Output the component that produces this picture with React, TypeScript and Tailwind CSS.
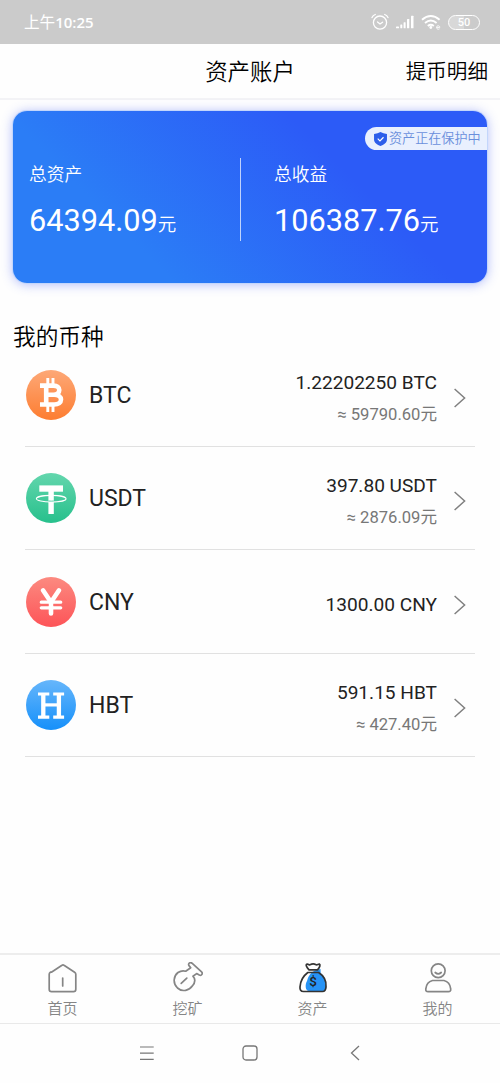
import React from 'react';

type Coin = {
  symbol: string;
  amount: string;
  fiat?: string;
  icon: React.ReactNode;
};

const CoinBadge: React.FC<{ id: string; from: string; to: string; children: React.ReactNode }> = ({ id, from, to, children }) => (
  <svg viewBox="0 0 50 50" className="w-[50px] h-[50px] shrink-0" fill="none">
    <defs>
      <linearGradient id={id} x1="0" y1="0" x2="0" y2="1">
        <stop offset="0" stopColor={from} />
        <stop offset="1" stopColor={to} />
      </linearGradient>
    </defs>
    <circle cx="25" cy="25" r="25" fill={`url(#${id})`} />
    {children}
  </svg>
);

const BtcIcon = () => (
  <CoinBadge id="btc" from="#fda877" to="#fd7d31">
    <g stroke="#fff" strokeWidth="4.6" strokeLinejoin="round">
      <path d="M14 15.6h13.5c3.6 0 5.8 1.7 5.8 4.5s-2.2 4.6-5.8 4.6h-7.3M20.2 24.7h8c4.2 0 6.8 1.9 6.8 4.9s-2.6 4.9-6.8 4.9H14M20.2 15.6v18.9" />
      <path d="M21.8 8v7M27 8v7M21.8 35v7M27 35v7" strokeWidth="2.9" />
    </g>
  </CoinBadge>
);

const UsdtIcon = () => (
  <CoinBadge id="usdt" from="#63d6ad" to="#27c08c">
    <rect x="13.3" y="12.4" width="23.7" height="6.3" fill="#fff" />
    <rect x="22.4" y="17" width="5.4" height="24" fill="#fff" />
    <ellipse cx="25.2" cy="25.7" rx="14.8" ry="3.3" stroke="#fff" strokeWidth="1.1" />
    <path d="M22.4 28c2 .2 4 .2 5.4 0" stroke="#35c493" strokeWidth=".8" />
  </CoinBadge>
);

const CnyIcon = () => (
  <CoinBadge id="cny" from="#fc8a80" to="#fd5458">
    <g stroke="#fff" strokeLinecap="round">
      <path d="m17 13.3 8 12 8-12M25 25v11.5" strokeWidth="4.6" strokeLinejoin="round" />
      <path d="M15.3 25.2h19.4M15.3 30.8h19.4" strokeWidth="3.3" />
      <path d="M15 28h20" stroke="#fd6c6b" strokeWidth="1.6" strokeLinecap="butt" />
      <path d="M25 27v3" strokeWidth="4.4" strokeLinecap="butt" />
    </g>
  </CoinBadge>
);

const HbtIcon = () => (
  <CoinBadge id="hbt" from="#66b6fb" to="#1690fa">
    <g stroke="#fff">
      <path d="M17.3 14v23M32.9 14v23" strokeWidth="4.3" />
      <path d="M12 14h11.3M27.2 14h10.9M12 37.2h11.3M27.2 37.2h10.9" strokeWidth="3.2" />
      <path d="M17 24.9h16" strokeWidth="3.2" />
    </g>
  </CoinBadge>
);

const coins: Coin[] = [
  { symbol: 'BTC', amount: '1.22202250 BTC', fiat: '≈ 59790.60元', icon: <BtcIcon /> },
  { symbol: 'USDT', amount: '397.80 USDT', fiat: '≈ 2876.09元', icon: <UsdtIcon /> },
  { symbol: 'CNY', amount: '1300.00 CNY', icon: <CnyIcon /> },
  { symbol: 'HBT', amount: '591.15 HBT', fiat: '≈ 427.40元', icon: <HbtIcon /> },
];

const StatusBar = () => (
  <div className="h-11 bg-[#cbcbcb] text-white flex items-center justify-between pl-6 pr-[20px]">
    <span className="font-['Open_Sans','Noto_Sans_CJK_SC',sans-serif] text-[15.6px] leading-none pt-[2px]">
      上午<span className="font-semibold text-[15px]">10:25</span>
    </span>
    <div className="flex items-center">
      <svg viewBox="0 0 18 18" className="w-[18px] h-[18px] mr-[6px]" fill="none" stroke="currentColor" strokeWidth="1.3" strokeLinecap="round">
        <circle cx="9" cy="9.6" r="6.6" />
        <path d="M6.5 9 9 11l2.6-1.8M1 4.6Q2 2.4 4.3 1.5M13.7 1.5Q16 2.4 17 4.6" />
      </svg>
      <svg viewBox="0 0 20 14" className="w-[20px] h-[14px] mr-[6px]" fill="currentColor">
        <rect x="1" y="11.5" width="3" height="1.8" rx=".6" />
        <rect x="5.3" y="9.6" width="2" height="3.7" rx=".5" />
        <rect x="8.6" y="7.2" width="2" height="6.1" rx=".5" />
        <rect x="12" y="4" width="2.3" height="9.3" rx=".5" />
        <rect x="16" y=".8" width="2.5" height="12.5" rx=".5" />
      </svg>
      <svg viewBox="0 0 20 16" className="w-[20px] h-[16px] mr-[7px]" fill="none" stroke="currentColor" strokeWidth="1.9">
        <path d="M1 5.7Q9.8-1.8 18.6 5.7M4 9Q9.8 4 15.6 9M6.8 12Q9.8 9.6 12.8 12" />
        <circle cx="9.8" cy="13.5" r="1.4" fill="currentColor" stroke="none" />
        <path d="M15.6 13.4h3.2c0-2.2-3.2-2.2-3.2 0 0 2 2 2.2 3 1.4" strokeWidth=".9" />
      </svg>
      <div className="w-[32px] h-[15px] rounded-full border-[1.5px] border-white flex items-center justify-center bg-[linear-gradient(90deg,#d8d8d8_50%,#cbcbcb_50%)]">
        <span className="font-['Roboto',sans-serif] font-medium text-[11px] leading-none">50</span>
      </div>
    </div>
  </div>
);

const Header = () => (
  <header className="h-14 border-b-2 border-[#f3f3f6] grid grid-cols-[1fr_auto_1fr] items-center px-3 pt-[3px] text-black font-[350]">
    <span />
    <h1 className="text-[22.4px] leading-none">资产账户</h1>
    <button className="justify-self-end text-[20.6px] leading-none">提币明细</button>
  </header>
);

const Total: React.FC<{ label: string; value: string }> = ({ label, value }) => (
  <div>
    <div className="text-[17.7px] leading-[26px] font-[350]">{label}</div>
    <div className="mt-[14px] text-[30.7px] leading-[38px] whitespace-nowrap">
      {value}
      <span className="text-[18.5px] font-[350]">元</span>
    </div>
  </div>
);

const BalanceCard = () => (
  <section className="relative mx-[13px] mt-[11px] h-[172px] rounded-[14px] text-white bg-[linear-gradient(45deg,#2b7df6_25%,#2c5bf7_69%)] shadow-[0_0_0_1px_#c3d6fb,0_1px_12px_rgba(70,95,245,0.45)] flex pt-[47px]">
    <div className="w-[228px] h-[83px] border-r border-white/70 pl-4 pt-[4px]">
      <Total label="总资产" value="64394.09" />
    </div>
    <div className="pl-[33px] pt-[4px]">
      <Total label="总收益" value="106387.76" />
    </div>
    <div className="absolute right-0 top-4 h-[23px] w-[122px] pl-[9px] pt-px rounded-l-full bg-[#e9f0fe] flex items-center text-[#6a8fdc] text-[13.1px] leading-none whitespace-nowrap font-[350]">
      <svg viewBox="0 0 12 13" className="w-[13px] h-[14px] mr-[2px] shrink-0">
        <path d="M6 0Q8.5 1.6 12 1.9V7c0 3-3 5-6 6-3-1-6-3-6-6V1.9Q3.5 1.6 6 0Z" fill="#2c5eea" />
        <path d="m3.4 6.2 2.1 2 3.3-3.3" fill="none" stroke="#fff" strokeWidth="1.1" />
      </svg>
      资产正在保护中
    </div>
  </section>
);

const CoinRow: React.FC<{ coin: Coin }> = ({ coin }) => (
  <li className="h-[103.4px] mx-[25px] pl-px border-b border-[#e1e1e1] flex items-center">
    {coin.icon}
    <span className="ml-[13px] pt-px text-[23px] leading-none text-[#222]">{coin.symbol}</span>
    <div className="ml-auto pt-[6px] text-right">
      <div className="text-[19.1px] leading-[28px] text-[#222]">{coin.amount}</div>
      {coin.fiat && <div className="mt-[6px] text-[16.6px] leading-[24px] text-[#777]">{coin.fiat}</div>}
    </div>
    <svg viewBox="0 0 12 20" className="w-[12px] h-[20px] ml-[17px] mr-[9px] mt-[6px]" fill="none" stroke="#808080" strokeWidth="1.5">
      <path d="m.6 1 10 9-10 9" />
    </svg>
  </li>
);

const tabs = [
  {
    label: '首页',
    icon: (
      <>
        <path d="M3.4 10.2 14 3.2q1-.7 2 0l10.6 7q1.2.8 1.2 2v15q0 2.4-2.4 2.4H3.600q-2.400 0-2.400-2.400v-15q0-1.200 1.200-2Z" />
        <path d="M14.700 16v8" />
      </>
    ),
  },
  {
    label: '挖矿',
    icon: (
      <>
        <path d="m12.7 9.2 5-3.4-1.5-1.9c-1.6-2.1.8-4.2 2.8-2.7l9.3 8.4c2 1.8.3 4.6-2 3.5l-2.7-1.5-3.6 2.7c2.5 2.3 2.3 6.2-.3 9.2-3.6 5-10.2 7-15.2 2.5-5-5-4-12 .5-15.5 2.5-1.7 5.2-2.1 7.7-1.3Z" />
        <path d="m8.2 21.3 5.6-5.2" />
      </>
    ),
  },
  {
    label: '资产',
    icon: (
      <>
        <path d="M12 12.5c3-4 7-5 10.5-5.5l.2 4c4 4 5.5 9 5.3 14 0 3-1 4-3 4H11c-4 0-4-7-2-10 1-3 1-4 3-6.5Z" fill="#2793f5" stroke="none" />
        <g stroke="#333">
          <path d="M9.8 10.5h10.8c5.5 3.5 8 9 7.4 14.5-.2 3-1 4.5-3.5 4.5h-19c-2.8 0-3.7-2-3.5-4.5.3-6 3.2-11 7.8-14.5ZM11 7.8C8.2 5 7.5 2.5 9 2.1c1.2-.4 1.9 1 3 .7 1.3-.7 2-.9 3.2-.9s2 .4 3 .9c1.2.4 2-1 3.2-.7 1.2.5.5 3.2-1.9 5.7M11 7.8h8.5" />
        </g>
        <text x="15" y="24" textAnchor="middle" fill="#222" stroke="none" className="font-['Roboto',sans-serif] font-medium text-[13.5px]">$</text>
      </>
    ),
  },
  {
    label: '我的',
    icon: (
      <>
        <circle cx="15.2" cy="8.7" r="6.9" />
        <path d="M12.2 10.5q3 2.7 6 0M9.5 18.5H21c4.2 1 6.2 4 6.7 8.3.2 2-.5 2.8-2.5 2.8h-20c-2 0-2.6-.8-2.4-2.8.5-4.3 2.6-7.3 6.7-8.3Z" />
      </>
    ),
  },
];

const TabBar = () => (
  <nav className="h-[71px] border-t-2 border-b border-t-[#ededed] border-b-[#e9e9e9] grid grid-cols-4">
    {tabs.map((tab) => (
      <button key={tab.label} className="flex flex-col items-center pt-[7px] text-[#858585]">
        <svg viewBox="0 0 30 32" className="w-[30px] h-[32px]" fill="none" stroke="currentColor" strokeWidth="1.7" strokeLinecap="round" strokeLinejoin="round">
          {tab.icon}
        </svg>
        <span className="mt-[5px] text-[15px] leading-[20px] font-[350]">{tab.label}</span>
      </button>
    ))}
  </nav>
);

const SystemNav = () => (
  <div className="h-[59px] pb-[2px] flex items-center justify-center gap-[88px] text-[#777]">
    <svg viewBox="0 0 16 16" className="w-4 h-4" fill="none" stroke="currentColor" strokeWidth="1.2">
      <path d="M2 2h13.7M2 8.2h13.7M2 14.4h13.7" />
    </svg>
    <svg viewBox="0 0 16 16" className="w-4 h-4" fill="none" stroke="currentColor" strokeWidth="1.3">
      <rect x="1" y="1" width="14" height="14" rx="3" />
    </svg>
    <svg viewBox="0 0 16 16" className="w-4 h-4" fill="none" stroke="currentColor" strokeWidth="1.3">
      <path d="M13 1 5.5 8l7.5 7" />
    </svg>
  </div>
);

export default function App() {
  return (
    <div className="w-[500px] h-[1083px] overflow-hidden bg-[#fefefe] flex flex-col font-['Roboto','Noto_Sans_CJK_SC',sans-serif]">
      <StatusBar />
      <Header />
      <main className="flex-1">
        <BalanceCard />
        <h2 className="h-[60.6px] flex items-center pl-[13px] pt-[50px] text-[22.7px] leading-none font-[350] text-black">我的币种</h2>
        <ul>
          {coins.map((coin) => (
            <CoinRow key={coin.symbol} coin={coin} />
          ))}
        </ul>
      </main>
      <TabBar />
      <SystemNav />
    </div>
  );
}
